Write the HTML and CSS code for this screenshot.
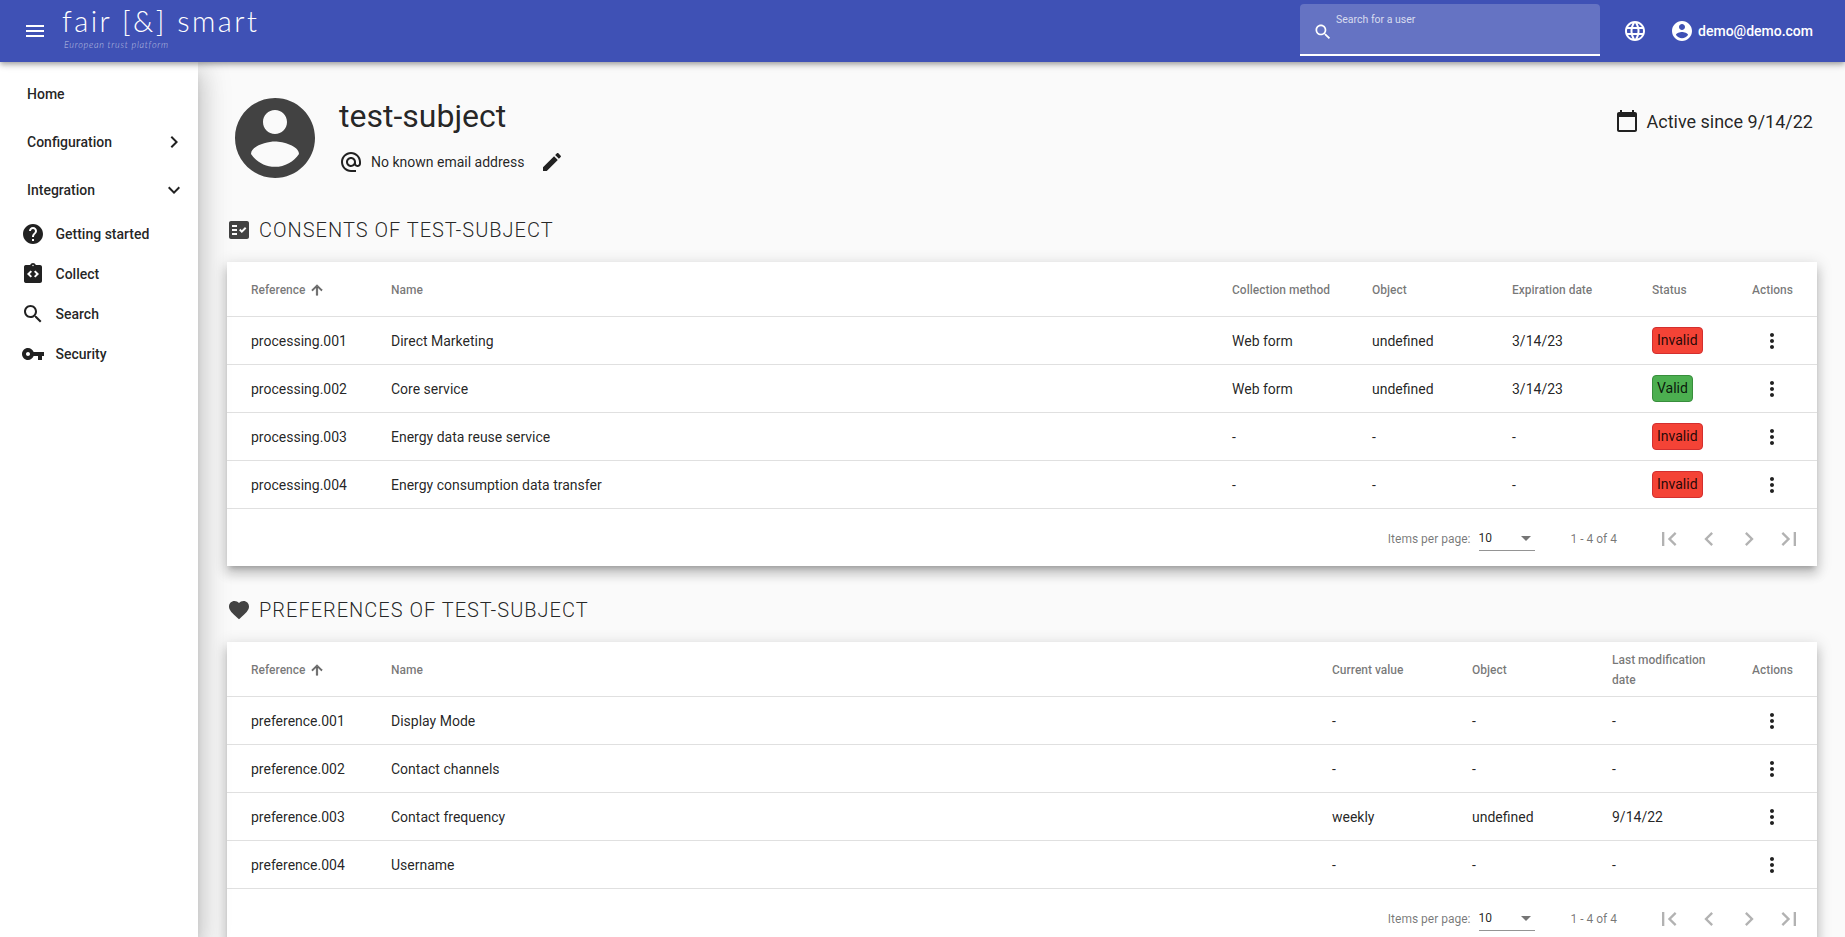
FILE: index.html
```html
<!DOCTYPE html>
<html lang="en">
<head>
    <meta charset="UTF-8">
    <meta name="viewport" content="width=device-width, initial-scale=1.0">
    <title>fair [&amp;] smart</title>
    <link rel="stylesheet" href="styles.css">
</head>
<body>

<!-- icon set -->
<svg class="icon-defs" xmlns="http://www.w3.org/2000/svg">
  <symbol id="i-menu" viewBox="0 0 24 24"><path d="M3 18h18v-2H3v2zm0-5h18v-2H3v2zm0-7v2h18V6H3z"/></symbol>
  <symbol id="i-search" viewBox="0 0 24 24"><path d="M15.5 14h-.79l-.28-.27C15.41 12.59 16 11.11 16 9.5 16 5.91 13.09 3 9.5 3S3 5.91 3 9.5 5.91 16 9.5 16c1.61 0 3.09-.59 4.23-1.57l.27.28v.79l5 4.99L20.49 19l-4.99-5zm-6 0C7.01 14 5 11.99 5 9.5S7.01 5 9.5 5 14 7.01 14 9.5 11.99 14 9.5 14z"/></symbol>
  <symbol id="i-language" viewBox="0 0 24 24"><path d="M11.99 2C6.47 2 2 6.48 2 12s4.47 10 9.99 10C17.52 22 22 17.52 22 12S17.52 2 11.99 2zm6.93 6h-2.95c-.32-1.25-.78-2.45-1.38-3.56 1.84.63 3.37 1.91 4.33 3.56zM12 4.04c.83 1.2 1.48 2.53 1.91 3.96h-3.82c.43-1.43 1.08-2.76 1.91-3.96zM4.26 14C4.1 13.36 4 12.69 4 12s.1-1.36.26-2h3.38c-.08.66-.14 1.32-.14 2 0 .68.06 1.34.14 2H4.26zm.82 2h2.95c.32 1.25.78 2.45 1.38 3.56-1.84-.63-3.37-1.9-4.33-3.56zm2.95-8H5.08c.96-1.66 2.49-2.93 4.33-3.56C8.81 5.55 8.35 6.75 8.03 8zM12 19.96c-.83-1.2-1.48-2.53-1.91-3.96h3.82c-.43 1.43-1.08 2.76-1.91 3.96zM14.34 14H9.66c-.09-.66-.16-1.32-.16-2 0-.68.07-1.35.16-2h4.68c.09.65.16 1.32.16 2 0 .68-.07 1.34-.16 2zm.25 5.56c.6-1.11 1.06-2.31 1.38-3.56h2.95c-.96 1.65-2.49 2.93-4.33 3.56zM16.36 14c.08-.66.14-1.32.14-2 0-.68-.06-1.34-.14-2h3.38c.16.64.26 1.31.26 2s-.1 1.36-.26 2h-3.38z"/></symbol>
  <symbol id="i-account" viewBox="0 0 24 24"><path d="M12 2C6.48 2 2 6.48 2 12s4.48 10 10 10 10-4.48 10-10S17.52 2 12 2zm0 3c1.66 0 3 1.34 3 3s-1.34 3-3 3-3-1.34-3-3 1.34-3 3-3zm0 14.2c-2.5 0-4.71-1.28-6-3.22.03-1.99 4-3.08 6-3.08 1.99 0 5.97 1.09 6 3.08-1.29 1.94-3.5 3.22-6 3.22z"/></symbol>
  <symbol id="i-at" viewBox="0 0 24 24"><path d="M12 2C6.48 2 2 6.48 2 12s4.48 10 10 10h5v-2h-5c-4.34 0-8-3.66-8-8s3.66-8 8-8 8 3.66 8 8v1.43c0 .79-.71 1.57-1.5 1.57s-1.5-.78-1.5-1.57V12c0-2.76-2.24-5-5-5s-5 2.24-5 5 2.24 5 5 5c1.38 0 2.64-.56 3.54-1.47.65.89 1.77 1.47 2.96 1.47 1.97 0 3.5-1.6 3.5-3.57V12c0-5.52-4.48-10-10-10zm0 13c-1.66 0-3-1.34-3-3s1.34-3 3-3 3 1.34 3 3-1.34 3-3 3z"/></symbol>
  <symbol id="i-edit" viewBox="0 0 24 24"><path d="M3 17.25V21h3.75L17.81 9.94l-3.75-3.75L3 17.25zM20.71 7.04c.39-.39.39-1.02 0-1.41l-2.34-2.34c-.39-.39-1.02-.39-1.41 0l-1.83 1.83 3.75 3.75 1.83-1.83z"/></symbol>
  <symbol id="i-calendar" viewBox="0 0 24 24"><path d="M20 3h-1V1h-2v2H7V1H5v2H4c-1.1 0-2 .9-2 2v16c0 1.1.9 2 2 2h16c1.1 0 2-.9 2-2V5c0-1.1-.9-2-2-2zm0 18H4V8h16v13z"/></symbol>
  <symbol id="i-check" viewBox="0 0 24 24"><path fill-rule="evenodd" d="M20 3H4c-1.1 0-2 .9-2 2v14c0 1.1.9 2 2 2h16c1.1 0 2-.9 2-2V5c0-1.1-.9-2-2-2zM10 17H5v-2h5v2zm0-4H5v-2h5v2zm0-4H5V7h5v2zm4.82 6L12 12.16l1.41-1.41 1.41 1.42L17.99 9l1.42 1.42L14.82 15z"/></symbol>
  <symbol id="i-heart" viewBox="0 0 24 24"><path d="M12 21.35l-1.45-1.32C5.4 15.36 2 12.28 2 8.5 2 5.42 4.42 3 7.5 3c1.74 0 3.41.81 4.5 2.09C13.09 3.81 14.76 3 16.5 3 19.58 3 22 5.42 22 8.5c0 3.78-3.4 6.86-8.55 11.54L12 21.35z"/></symbol>
  <symbol id="i-up" viewBox="0 0 24 24"><path d="M4 12l1.41 1.41L11 7.83V20h2V7.83l5.58 5.59L20 12l-8-8-8 8z"/></symbol>
  <symbol id="i-dots" viewBox="0 0 24 24"><path d="M12 8c1.1 0 2-.9 2-2s-.9-2-2-2-2 .9-2 2 .9 2 2 2zm0 2c-1.1 0-2 .9-2 2s.9 2 2 2 2-.9 2-2-.9-2-2-2zm0 6c-1.1 0-2 .9-2 2s.9 2 2 2 2-.9 2-2-.9-2-2-2z"/></symbol>
  <symbol id="i-help" viewBox="0 0 24 24"><path d="M12 2C6.48 2 2 6.48 2 12s4.48 10 10 10 10-4.48 10-10S17.52 2 12 2zm1 17h-2v-2h2v2zm2.07-7.75l-.9.92C13.45 12.9 13 13.5 13 15h-2v-.5c0-1.1.45-2.1 1.17-2.83l1.24-1.26c.37-.36.59-.86.59-1.41 0-1.1-.9-2-2-2s-2 .9-2 2H8c0-2.21 1.79-4 4-4s4 1.79 4 4c0 .88-.36 1.68-.93 2.25z"/></symbol>
  <symbol id="i-code" viewBox="0 0 24 24"><path d="M19 3h-4.18C14.4 1.84 13.3 1 12 1s-2.4.84-2.82 2H5c-.14 0-.27.01-.4.04-.39.08-.74.28-1.01.55-.18.18-.33.4-.43.64-.1.23-.16.49-.16.77v14c0 .27.06.54.16.78s.25.45.43.64c.27.27.62.47 1.01.55.13.02.26.03.4.03h14c1.1 0 2-.9 2-2V5c0-1.1-.9-2-2-2zm-8 11.17l-1.41 1.42L6 12l3.59-3.59L11 9.83 8.83 12 11 14.17zm1-9.92c-.41 0-.75-.34-.75-.75s.34-.75.75-.75.75.34.75.75-.34.75-.75.75zm2.41 11.34L13 14.17 15.17 12 13 9.83l1.41-1.42L18 12l-3.59 3.59z"/></symbol>
  <symbol id="i-key" viewBox="0 0 24 24"><path d="M12.65 10C11.83 7.67 9.61 6 7 6c-3.31 0-6 2.69-6 6s2.69 6 6 6c2.61 0 4.83-1.67 5.65-4H17v4h4v-4h2v-4H12.65zM7 14c-1.1 0-2-.9-2-2s.9-2 2-2 2 .9 2 2-.9 2-2 2z"/></symbol>
  <symbol id="i-right" viewBox="0 0 24 24"><path d="M8.59 16.59L13.17 12 8.59 7.41 10 6l6 6-6 6z"/></symbol>
  <symbol id="i-down" viewBox="0 0 24 24"><path d="M16.59 8.59L12 13.17 7.41 8.59 6 10l6 6 6-6z"/></symbol>
  <symbol id="i-first" viewBox="0 0 24 24"><path d="M18.41 16.59L13.82 12l4.59-4.59L17 6l-6 6 6 6zM6 6h2v12H6z"/></symbol>
  <symbol id="i-prev" viewBox="0 0 24 24"><path d="M15.41 7.41L14 6l-6 6 6 6 1.41-1.41L10.83 12z"/></symbol>
  <symbol id="i-next" viewBox="0 0 24 24"><path d="M10 6L8.59 7.41 13.17 12l-4.58 4.59L10 18l6-6z"/></symbol>
  <symbol id="i-last" viewBox="0 0 24 24"><path d="M5.59 7.41L10.18 12l-4.59 4.59L7 18l6-6-6-6zM16 6h2v12h-2z"/></symbol>
</svg>

<header class="toolbar">
  <svg class="icon menu-icon"><use href="#i-menu"/></svg>
  <div class="logo">
    <div class="logo-name">fair [&amp;] smart</div>
    <div class="logo-sub">European trust platform</div>
  </div>

  <div class="user-search">
    <svg class="icon search-icon"><use href="#i-search"/></svg>
    <span class="search-label">Search for a user</span>
  </div>
  <svg class="icon lang-icon"><use href="#i-language"/></svg>
  <svg class="icon"><use href="#i-account"/></svg>
  <span class="user-mail">demo@demo.com</span>
</header>

<div class="layout">
  <nav class="sidebar">
    <a class="nav-item">Home</a>
    <a class="nav-item">Configuration <svg class="icon"><use href="#i-right"/></svg></a>
    <a class="nav-item">Integration <svg class="icon"><use href="#i-down"/></svg></a>
    <a class="nav-sub"><svg class="icon"><use href="#i-help"/></svg>Getting started</a>
    <a class="nav-sub"><svg class="icon"><use href="#i-code"/></svg>Collect</a>
    <a class="nav-sub"><svg class="icon"><use href="#i-search"/></svg>Search</a>
    <a class="nav-sub"><svg class="icon"><use href="#i-key"/></svg>Security</a>
  </nav>

  <main class="content">
    <div class="profile">
      <svg class="avatar"><use href="#i-account"/></svg>
      <div class="profile-info">
        <h1 class="profile-name">test-subject</h1>
        <div class="profile-mail">
          <svg class="icon"><use href="#i-at"/></svg>
          <span>No known email address</span>
          <svg class="icon edit-icon"><use href="#i-edit"/></svg>
        </div>
      </div>
      <div class="active-since">
        <svg class="icon"><use href="#i-calendar"/></svg>
        <span>Active since 9/14/22</span>
      </div>
    </div>

    <h2 class="section-title"><svg class="icon"><use href="#i-check"/></svg>CONSENTS OF TEST-SUBJECT</h2>
    <section class="card">
      <table class="data-table">
        <colgroup>
          <col class="col-ref"><col><col class="col-std"><col class="col-std"><col class="col-std"><col class="col-status"><col class="col-actions">
        </colgroup>
        <thead>
          <tr>
            <th><span class="sort-head">Reference <svg class="icon sort-icon"><use href="#i-up"/></svg></span></th>
            <th>Name</th>
            <th>Collection method</th>
            <th>Object</th>
            <th>Expiration date</th>
            <th>Status</th>
            <th>Actions</th>
          </tr>
        </thead>
        <tbody>
          <tr>
            <td>processing.001</td><td>Direct Marketing</td><td>Web form</td><td>undefined</td><td>3/14/23</td>
            <td><span class="badge badge-invalid">Invalid</span></td>
            <td><svg class="icon dots"><use href="#i-dots"/></svg></td>
          </tr>
          <tr>
            <td>processing.002</td><td>Core service</td><td>Web form</td><td>undefined</td><td>3/14/23</td>
            <td><span class="badge badge-valid">Valid</span></td>
            <td><svg class="icon dots"><use href="#i-dots"/></svg></td>
          </tr>
          <tr>
            <td>processing.003</td><td>Energy data reuse service</td><td>-</td><td>-</td><td>-</td>
            <td><span class="badge badge-invalid">Invalid</span></td>
            <td><svg class="icon dots"><use href="#i-dots"/></svg></td>
          </tr>
          <tr>
            <td>processing.004</td><td>Energy consumption data transfer</td><td>-</td><td>-</td><td>-</td>
            <td><span class="badge badge-invalid">Invalid</span></td>
            <td><svg class="icon dots"><use href="#i-dots"/></svg></td>
          </tr>
        </tbody>
      </table>
      <div class="paginator">
        <span>Items per page:</span>
        <div class="page-size"><span>10</span><i class="select-arrow"></i></div>
        <span class="page-range">1 - 4 of 4</span>
        <svg class="page-btn page-btn-first"><use href="#i-first"/></svg>
        <svg class="page-btn"><use href="#i-prev"/></svg>
        <svg class="page-btn"><use href="#i-next"/></svg>
        <svg class="page-btn"><use href="#i-last"/></svg>
      </div>
    </section>

    <h2 class="section-title"><svg class="icon"><use href="#i-heart"/></svg>PREFERENCES OF TEST-SUBJECT</h2>
    <section class="card">
      <table class="data-table">
        <colgroup>
          <col class="col-ref"><col><col class="col-std"><col class="col-std"><col class="col-std"><col class="col-actions">
        </colgroup>
        <thead>
          <tr>
            <th><span class="sort-head">Reference <svg class="icon sort-icon"><use href="#i-up"/></svg></span></th>
            <th>Name</th>
            <th>Current value</th>
            <th>Object</th>
            <th>Last modification date</th>
            <th>Actions</th>
          </tr>
        </thead>
        <tbody>
          <tr>
            <td>preference.001</td><td>Display Mode</td><td>-</td><td>-</td><td>-</td>
            <td><svg class="icon dots"><use href="#i-dots"/></svg></td>
          </tr>
          <tr>
            <td>preference.002</td><td>Contact channels</td><td>-</td><td>-</td><td>-</td>
            <td><svg class="icon dots"><use href="#i-dots"/></svg></td>
          </tr>
          <tr>
            <td>preference.003</td><td>Contact frequency</td><td>weekly</td><td>undefined</td><td>9/14/22</td>
            <td><svg class="icon dots"><use href="#i-dots"/></svg></td>
          </tr>
          <tr>
            <td>preference.004</td><td>Username</td><td>-</td><td>-</td><td>-</td>
            <td><svg class="icon dots"><use href="#i-dots"/></svg></td>
          </tr>
        </tbody>
      </table>
      <div class="paginator">
        <span>Items per page:</span>
        <div class="page-size"><span>10</span><i class="select-arrow"></i></div>
        <span class="page-range">1 - 4 of 4</span>
        <svg class="page-btn page-btn-first"><use href="#i-first"/></svg>
        <svg class="page-btn"><use href="#i-prev"/></svg>
        <svg class="page-btn"><use href="#i-next"/></svg>
        <svg class="page-btn"><use href="#i-last"/></svg>
      </div>
    </section>
  </main>
</div>

</body>
</html>
```

FILE: styles.css
```css
* {
  box-sizing: border-box;
}

html,
body {
  height: 100%;
}

body {
  margin: 0;
  overflow: hidden;
  display: flex;
  flex-direction: column;
  font-family: Roboto, "Helvetica Neue", sans-serif;
  font-size: 14px;
  color: rgba(0, 0, 0, 0.87);
  background: #fafafa;
}

.icon-defs {
  display: none;
}

.icon {
  width: 24px;
  height: 24px;
  flex: none;
  fill: currentColor;
}

/* toolbar */
.toolbar {
  position: relative;
  z-index: 3;
  flex: none;
  display: flex;
  align-items: center;
  height: 62px;
  padding: 0 32px 0 23px;
  color: #fff;
  background: #3f51b5;
  box-shadow: 0 2px 4px -1px rgba(0, 0, 0, 0.2), 0 4px 5px 0 rgba(0, 0, 0, 0.14), 0 1px 10px 0 rgba(0, 0, 0, 0.12);
}

.logo {
  margin: 0 0 5px 15px;
  font-family: Lato, sans-serif;
}

.logo-name {
  font-size: 29px;
  font-weight: 300;
  line-height: 30px;
  letter-spacing: 2.45px;
  white-space: nowrap;
}

.logo-sub {
  margin: 3px 0 0 2px;
  font-size: 9px;
  font-style: italic;
  font-weight: 300;
  line-height: 12px;
  letter-spacing: 0.75px;
  color: rgba(255, 255, 255, 0.65);
}

.user-search {
  display: flex;
  align-self: flex-start;
  width: 300px;
  height: 52px;
  margin: 4px 0 0 auto;
  padding: 18px 0 0 13px;
  background: #6573c3;
  border-bottom: 2px solid #fff;
  border-radius: 4px 4px 0 0;
}

.search-icon {
  width: 20px;
  height: 20px;
}

.search-label {
  margin: -9px 0 0 3px;
  font-size: 10.5px;
  line-height: 14px;
  color: rgba(255, 255, 255, 0.75);
}

.lang-icon {
  margin: 0 23px;
}

.user-mail {
  margin-left: 4px;
  font-size: 14px;
  font-weight: 500;
}

/* sidebar */
.layout {
  flex: 1;
  display: flex;
  min-height: 0;
}

.sidebar {
  position: relative;
  z-index: 2;
  flex: none;
  width: 198px;
  padding-top: 8px;
  background: #fff;
  box-shadow: 0 8px 10px -5px rgba(0, 0, 0, 0.2), 0 16px 24px 2px rgba(0, 0, 0, 0.14), 0 6px 30px 5px rgba(0, 0, 0, 0.12);
  font-weight: 500;
}

.nav-item {
  display: flex;
  align-items: center;
  justify-content: space-between;
  height: 48px;
  padding: 0 12px 0 27px;
}

.nav-sub {
  display: flex;
  align-items: center;
  gap: 10.5px;
  height: 40px;
  padding-left: 21px;
}

/* main area */
.content {
  flex: 1;
  min-width: 0;
  padding: 28px 28px 0 29px;
}

.profile {
  display: flex;
  height: 96px;
}

.avatar {
  width: 96px;
  height: 96px;
  flex: none;
  fill: #424242;
}

.profile-info {
  margin-left: 16px;
  padding-top: 6px;
}

.profile-name {
  margin: 0 0 14px;
  font-size: 32px;
  font-weight: 400;
  line-height: 40px;
}

.profile-mail {
  display: flex;
  align-items: center;
  gap: 8px;
}

.edit-icon {
  margin-left: 8px;
}

.active-since {
  display: flex;
  align-items: center;
  gap: 7px;
  align-self: flex-start;
  margin: 19px 4px 0 auto;
  font-size: 18px;
}

.section-title {
  display: flex;
  align-items: center;
  gap: 8px;
  height: 32px;
  margin: 27px 0 17px;
  padding-top: 1px;
  font-size: 20px;
  font-weight: 300;
  letter-spacing: 1px;
  color: rgba(0, 0, 0, 0.87);
}

.section-title .icon {
  fill: #424242;
}

.card {
  background: #fff;
  box-shadow: 0 5px 5px -3px rgba(0, 0, 0, 0.2), 0 8px 10px 1px rgba(0, 0, 0, 0.14), 0 3px 14px 2px rgba(0, 0, 0, 0.12);
}

/* tables */
.data-table {
  width: 100%;
  table-layout: fixed;
  border-collapse: separate;
  border-spacing: 0;
}

.col-ref {
  width: 164px;
}

.col-std {
  width: 140px;
}

.col-status {
  width: 100px;
}

.col-actions {
  width: 65px;
}

.data-table th {
  height: 55px;
  padding: 1px 24px 0 0;
  font-size: 12px;
  font-weight: 500;
  line-height: 20px;
  text-align: left;
  color: rgba(0, 0, 0, 0.54);
  border-bottom: 1px solid #e0e0e0;
}

.data-table td {
  height: 48px;
  padding: 0;
  border-bottom: 1px solid #e0e0e0;
}

.data-table th:first-child,
.data-table td:first-child {
  padding-left: 24px;
}

.data-table th:last-child {
  padding-right: 0;
}

.sort-head {
  display: inline-flex;
  align-items: center;
  gap: 4px;
}

.sort-icon {
  width: 16px;
  height: 16px;
  stroke: currentColor;
  stroke-width: 1;
}

.badge {
  display: inline-block;
  padding: 0 4px;
  line-height: 25px;
  border: 1px solid;
  border-radius: 4px;
  vertical-align: middle;
}

.badge-invalid {
  background: #f44336;
  border-color: #d32f2f;
}

.badge-valid {
  background: #4caf50;
  border-color: #388e3c;
}

.dots {
  display: block;
  margin-left: 8px;
}

/* paginator */
.paginator {
  display: flex;
  align-items: center;
  justify-content: flex-end;
  height: 57px;
  padding: 2px 8px 0 0;
  font-size: 12px;
  color: rgba(0, 0, 0, 0.54);
}

.page-size {
  display: flex;
  align-items: center;
  justify-content: space-between;
  width: 56px;
  height: 24px;
  margin: 0 0 0 8px;
  padding-right: 4px;
  color: rgba(0, 0, 0, 0.87);
  border-bottom: 1px solid rgba(0, 0, 0, 0.42);
}

.select-arrow {
  border-top: 5px solid rgba(0, 0, 0, 0.54);
  border-left: 5px solid transparent;
  border-right: 5px solid transparent;
}

.page-range {
  margin: 0 32px 0 36px;
}

.page-btn {
  width: 40px;
  height: 40px;
  padding: 6px;
  flex: none;
  fill: rgba(0, 0, 0, 0.3);
}
```
